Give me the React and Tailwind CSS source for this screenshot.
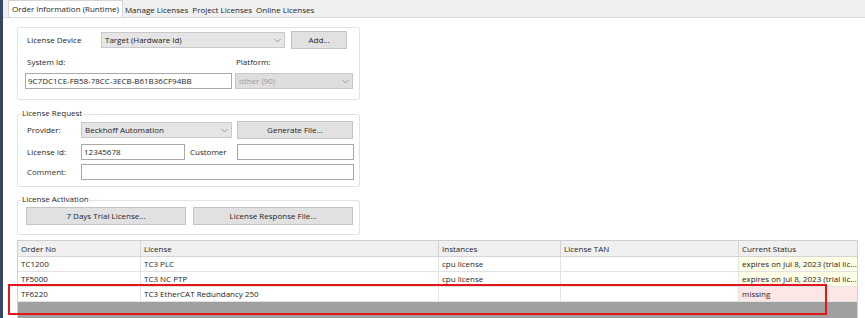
import React from "react";

function Chevron({ className = "" }) {
  return (
    <svg width="7" height="5" viewBox="0 0 7 5" className={className}>
      <path d="M0.5 1 L3.5 4 L6.5 1" fill="none" stroke="#8a8a8a" strokeWidth="0.8" />
    </svg>
  );
}

function Combo({ value, width, disabled = false }) {
  return (
    <div
      className={`flex items-center justify-between h-[16px] px-[3px] border border-[#c9c9c9] ${
        disabled ? "bg-[#dedede] text-[#9a9a9a]" : "bg-[#e5e5e5] text-[#222]"
      } ${width}`}
    >
      <span className="leading-none">{value}</span>
      <Chevron />
    </div>
  );
}

function Input({ value = "", width }) {
  return (
    <div className={`h-[16px] px-[2px] flex items-center bg-white border border-[#a9a9a9] ${width}`}>
      <span className="leading-none">{value}</span>
    </div>
  );
}

function Button({ children, width }) {
  return (
    <div
      className={`h-[18px] flex items-center justify-center bg-[#e1e1e1] border border-[#c4c4c4] ${width}`}
    >
      {children}
    </div>
  );
}

function Group({ title, children, className = "" }) {
  return (
    <div className={`relative w-[343px] border border-[#e3e3e3] rounded-[2px] ${className}`}>
      {title && (
        <span className="absolute -top-[6px] left-[3px] bg-white px-[1px] leading-none">{title}</span>
      )}
      {children}
    </div>
  );
}

const rows = [
  { no: "TC1200", lic: "TC3 PLC", inst: "cpu license", tan: "", status: "expires on Jul 8, 2023 (trial lic...", tone: "bg-[#fefde6]" },
  { no: "TF5000", lic: "TC3 NC PTP", inst: "cpu license", tan: "", status: "expires on Jul 8, 2023 (trial lic...", tone: "bg-[#fefde6]" },
  { no: "TF6220", lic: "TC3 EtherCAT Redundancy 250", inst: "", tan: "", status: "missing", tone: "bg-[#fde6e6]" },
];

const cols = ["w-[123px]", "w-[298px]", "w-[122px]", "w-[178px]", "w-[118px]"];

export default function App() {
  return (
    <div
      className="relative w-[865px] h-[318px] overflow-hidden bg-white flex text-[8px] text-[#1e1e1e]"
      style={{ fontFamily: '"Open Sans", "Noto Sans", sans-serif' }}
    >
      {/* left window edge */}
      <div className="w-[3px] bg-[#34466a] shrink-0" />

      <div className="flex-1 flex flex-col">
        <div className="h-[2px] bg-[#cbbf94]" />

        {/* Tabs */}
        <div className="h-[18px] bg-[#f0f0f0] border-b border-[#dadada] flex items-end pl-[5px]">
          <div className="h-[17px] px-[3px] bg-white border border-b-0 border-[#d5d5d5] flex items-center">
            Order Information (Runtime)
          </div>
          <div className="h-[15px] px-[2px] flex items-center">Manage Licenses</div>
          <div className="h-[15px] px-[2px] flex items-center">Project Licenses</div>
          <div className="h-[15px] px-[2px] flex items-center">Online Licenses</div>
        </div>

        {/* Content */}
        <div className="flex flex-col pl-[14px] pt-[9px]">
          <Group className="h-[73px] pl-[9px] pt-[3px]">
            <div className="flex items-center h-[18px]">
              <span className="w-[74px]">License Device</span>
              <Combo value="Target (Hardware Id)" width="w-[184px]" />
              <div className="w-[6px]" />
              <Button width="w-[56px]">Add...</Button>
            </div>
            <div className="flex items-center h-[23px] mt-[1px]">
              <span className="w-[209px]">System Id:</span>
              <span>Platform:</span>
            </div>
            <div className="flex items-center -ml-[2px]">
              <Input value="9C7DC1CE-FB58-78CC-3ECB-B61B36CF94BB" width="w-[207px]" />
              <div className="w-[3px]" />
              <Combo value="other (90)" width="w-[118px]" disabled />
            </div>
          </Group>

          <Group title="License Request" className="h-[73px] mt-[14px] pl-[9px] pt-[6px]">
            <div className="flex items-center h-[18px]">
              <span className="w-[54px]">Provider:</span>
              <Combo value="Beckhoff Automation" width="w-[151px]" />
              <div className="w-[5px]" />
              <Button width="w-[116px]">Generate File...</Button>
            </div>
            <div className="flex items-center h-[16px] mt-[5px]">
              <span className="w-[54px]">License Id:</span>
              <Input value="12345678" width="w-[104px]" />
              <span className="w-[52px] pl-[5px]">Customer</span>
              <Input width="w-[117px]" />
            </div>
            <div className="flex items-center h-[16px] mt-[4px]">
              <span className="w-[54px] text-[#333]">Comment:</span>
              <Input width="w-[273px]" />
            </div>
          </Group>

          <Group title="License Activation" className="h-[35px] mt-[13px] pl-[8px] pt-[6px]">
            <div className="flex items-center">
              <Button width="w-[160px]">7 Days Trial License...</Button>
              <div className="w-[7px]" />
              <Button width="w-[160px]">License Response File...</Button>
            </div>
          </Group>

          {/* Table */}
          <div className="mt-[5px] w-[841px] flex flex-col border border-[#cfcfcf]">
            <div className="flex h-[16px] bg-[#f0f0f0] border-b border-[#d5d5d5]">
              {["Order No", "License", "Instances", "License TAN", "Current Status"].map((h, i) => (
                <div key={h} className={`${cols[i]} px-[3px] flex items-center border-r border-[#d5d5d5] last:border-r-0`}>
                  {h}
                </div>
              ))}
            </div>
            {rows.map((r) => (
              <div key={r.no} className="flex h-[15px] border-b border-[#e2e2e2] bg-white">
                {[r.no, r.lic, r.inst, r.tan].map((c, i) => (
                  <div key={i} className={`${cols[i]} px-[3px] flex items-center border-r border-[#e2e2e2]`}>
                    {c}
                  </div>
                ))}
                <div className={`${cols[4]} px-[3px] flex items-center whitespace-nowrap ${r.tone}`}>
                  {r.status}
                </div>
              </div>
            ))}
            <div className="h-[20px] bg-[#a0a0a0]" />
          </div>
        </div>
      </div>

      {/* red highlight */}
      <div className="absolute left-[8px] top-[284px] w-[819px] h-[31px] border-2 border-[#e3161c]" />
    </div>
  );
}
